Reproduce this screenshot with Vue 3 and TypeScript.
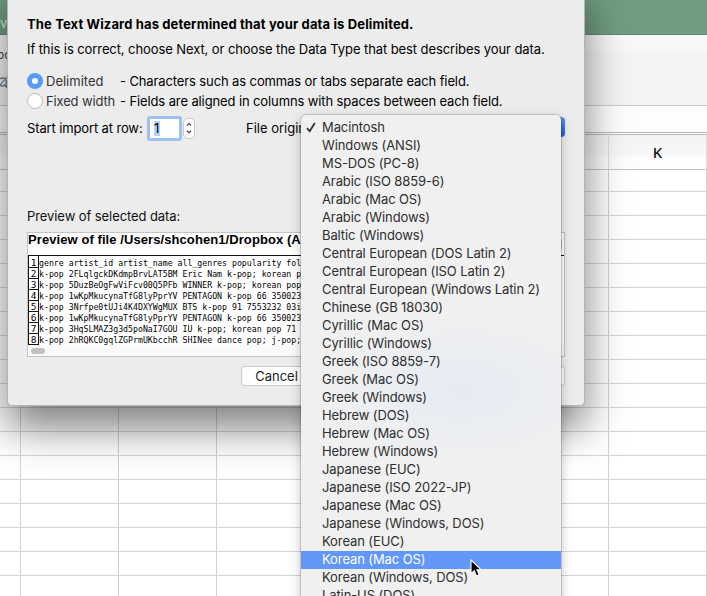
<script setup lang="ts">
import { ref } from 'vue'

const encodings: string[] = [
  'Macintosh', 'Windows (ANSI)', 'MS-DOS (PC-8)', 'Arabic (ISO 8859-6)', 'Arabic (Mac OS)',
  'Arabic (Windows)', 'Baltic (Windows)', 'Central European (DOS Latin 2)',
  'Central European (ISO Latin 2)', 'Central European (Windows Latin 2)', 'Chinese (GB 18030)',
  'Cyrillic (Mac OS)', 'Cyrillic (Windows)', 'Greek (ISO 8859-7)', 'Greek (Mac OS)',
  'Greek (Windows)', 'Hebrew (DOS)', 'Hebrew (Mac OS)', 'Hebrew (Windows)', 'Japanese (EUC)',
  'Japanese (ISO 2022-JP)', 'Japanese (Mac OS)', 'Japanese (Windows, DOS)', 'Korean (EUC)',
  'Korean (Mac OS)', 'Korean (Windows, DOS)', 'Latin-US (DOS)',
]
const selected = ref('Macintosh')
const hovered = ref('Korean (Mac OS)')
const mode = ref<'delimited' | 'fixed'>('delimited')

const preview: string[] = [
  'genre artist_id artist_name all_genres popularity fol',
  'k-pop 2FLqlgckDKdmpBrvLAT5BM Eric Nam k-pop; korean p',
  'k-pop 5DuzBeOgFwViFcv00Q5PFb WINNER k-pop; korean pop',
  'k-pop 1wKpMkucynaTfG8lyPprYV PENTAGON k-pop 66 350023',
  'k-pop 3Nrfpe0tUJi4K4DXYWgMUX BTS k-pop 91 7553232 03i',
  'k-pop 1wKpMkucynaTfG8lyPprYV PENTAGON k-pop 66 350023',
  'k-pop 3HqSLMAZ3g3d5poNaI7GOU IU k-pop; korean pop 71 ',
  'k-pop 2hRQKC0gqlZGPrmUKbcchR SHINee dance pop; j-pop;',
]
const columns: string[] = ['', '', '', '', '', '', '', 'K']
const rows = 18
</script>

<template>
  <div class="screen">
    <div class="titlebar"><span>v</span></div>
    <div class="ribbon">
      <span>oc</span>
      <svg width="8" height="16" viewBox="0 0 8 16" fill="none" stroke-width="1.4">
        <circle cx="2.500" cy="8" r="4" stroke="#777" />
        <path d="M4.500 10.500L8 14" stroke="#777" stroke-width="2" />
        <path d="M0 11L8 2" stroke="#6f94bd" />
      </svg>
    </div>
    <div class="formula"></div>
    <div class="sheet">
      <div class="row head">
        <div v-for="(c, i) in columns" :key="i" class="cell">{{ c }}</div>
      </div>
      <div v-for="r in rows" :key="r" class="row">
        <div v-for="(c, i) in columns" :key="i" class="cell"></div>
      </div>
    </div>

    <div class="dialog">
      <h1><span>The Text Wizard has determined that your data is Delimited.</span></h1>
      <p class="lead">If this is correct, choose Next, or choose the Data Type that best describes your data.</p>
      <label class="option" @click="mode = 'delimited'">
        <i class="radio" :class="{ on: mode === 'delimited' }"></i>
        <span class="name">Delimited</span>
        <span class="desc">- Characters such as commas or tabs separate each field.</span>
      </label>
      <label class="option" @click="mode = 'fixed'">
        <i class="radio" :class="{ on: mode === 'fixed' }"></i>
        <span class="name tight">Fixed width</span>
        <span class="desc">- Fields are aligned in columns with spaces between each field.</span>
      </label>
      <div class="import">
        <span class="start">Start import at row:</span>
        <div class="number"><span>1</span></div>
        <div class="stepper">
          <svg width="11" height="20" viewBox="0 0 11 20" fill="none" stroke="#444" stroke-width="1.3">
            <path d="M3.200 7.200L5.500 5L7.800 7.200M3.200 13L5.500 15.200L7.800 13" />
          </svg>
        </div>
        <span class="origin">File origin:</span>
        <div class="popup"></div>
      </div>
      <p class="caption">Preview of selected data:</p>
      <div class="preview">
        <div class="file">Preview of file /Users/shcohen1/Dropbox (AS</div>
        <div class="lines">
          <div v-for="(line, i) in preview" :key="i" class="line">
            <b>{{ i + 1 }}</b><code>{{ line }}</code>
          </div>
        </div>
        <div class="track"><i></i></div>
        <i class="vthumb"></i>
      </div>
      <div class="buttons">
        <button class="cancel">Cancel</button>
        <button class="finish"></button>
      </div>
    </div>

    <ul class="menu">
      <li
        v-for="name in encodings" :key="name" :class="{ hover: name === hovered }"
        @mouseenter="hovered = name" @click="selected = name"
      >
        <svg v-if="name === selected" class="check" width="10" height="11" viewBox="0 0 10 11">
          <path d="M1 6.200L3.700 9.300L8.800 1" fill="none" stroke="#333" stroke-width="1.8" />
        </svg>
        <span>{{ name }}</span>
      </li>
    </ul>
    <svg class="pointer" width="13" height="19" viewBox="0 0 13 19">
      <path d="M1 1V14.600L4.200 11.700L6.500 17L9.200 15.800L6.900 10.700H11Z" fill="#000" stroke="#fff" stroke-width="1.100" />
    </svg>
  </div>
</template>

<style>
body { margin: 0; overflow: hidden; }
</style>

<style scoped>
* { box-sizing: border-box; }
.screen {
  position: relative; width: 707px; height: 596px; overflow: hidden; background: #fff;
  font-family: Inter, "Liberation Sans", sans-serif; font-size: 13px; color: #111; white-space: nowrap;
}
.titlebar { height: 35px; background: #709d80; border-bottom: 1px solid #5f896e; color: #e0e8e2; padding-top: 15px; line-height: 16px; }
.ribbon { height: 71px; background: linear-gradient(#f8f8f8 17px, #f4f4f4 17px); border-bottom: 1px solid #ccc; display: flex; flex-direction: column; gap: 11px; padding-top: 12px; line-height: 16px; color: #444; font-size: 12px; }
.ribbon span { margin-left: -3px; }
.formula { height: 29px; background: #fdfdfd; border-bottom: 3px double #b8b8b8; }
.sheet { display: flex; flex-direction: column; }
.row { display: grid; grid-template-columns: 21px repeat(7, 98px); height: 24px; width: 707px; }
.cell { border-right: 1px solid #d2d2d2; border-bottom: 1px solid #d5d5d5; }
.head { height: 33px; background: linear-gradient(#f4f4f4, #f8f8f8 22px, #fdfdfd 22px); }
.head .cell { border-color: #c2c2c2; border-right-color: #ddd; text-align: center; font: 500 15px/34px "Noto Sans", sans-serif; }

.dialog {
  position: absolute; left: 7px; top: -20px; width: 578px; height: 426px; padding: 35px 20px 0;
  background: #ececec; border-radius: 5px; border: 1px solid #b4b4b4; border-top: 0;
  box-shadow: 0 22px 42px rgba(0, 0, 0, .5);
  display: flex; flex-direction: column;
}
.dialog > * { margin-left: -1px; margin-right: -1px; flex: none; }
h1 { margin-top: 0; margin-bottom: 0; font-size: 13px; line-height: 18px; font-weight: 700; letter-spacing: .135px; color: #000; }
.lead { margin-top: 7px; margin-bottom: 13px; line-height: 18px; letter-spacing: -.09px; color: #000; }
.option { display: flex; align-items: center; height: 20px; }
.radio { width: 16px; height: 16px; border-radius: 50%; background: #fff; border: 1px solid #bbb; flex: none; }
.radio.on { border: 5px solid #559af5; background: #fff; }
.name { width: 74px; margin-left: 3px; color: #333; }
.tight { letter-spacing: -.15px; }
.desc { letter-spacing: -.115px; color: #000; }
.import { display: flex; align-items: center; height: 24px; margin-top: 5px; color: #000; }
.start { width: 120px; letter-spacing: -.13px; }
.number { width: 35px; height: 25px; border: 3px solid #9fc1f2; background: #fff; padding: 2px 4px; line-height: 15px; border-radius: 3px; }
.number span { background: #b3d3fb; display: block; width: 6px; }
.stepper { width: 12px; height: 21px; margin-left: 1px; border-radius: 5px; background: #fff; border: 1px solid #c8c8c8; display: flex; align-items: center; justify-content: center; }
.origin { margin-left: 51px; width: 65px; }
.popup { flex: 1; height: 20px; border-radius: 4px; background: linear-gradient(#5a94f2, #2459ca); position: relative; top: -1px; }
.caption { margin-top: 67px; margin-bottom: 7px; line-height: 18px; letter-spacing: -.08px; }
.preview { position: relative; height: 125px; background: #fff; border: 1px solid #c4c4c4; overflow: hidden; }
.file { font: bold 13px/14px "Liberation Sans", sans-serif; letter-spacing: .08px; height: 22px; color: #000; }
.lines { border-top: 1px solid #111; height: 90px; }
.line { display: flex; height: 11px; line-height: 14px; font-family: "DejaVu Sans Mono", monospace; font-size: 9.500px; color: #000; }
.line b { width: 11px; height: 12px; border: 1px solid #111; border-top-width: 0; font-weight: 400; text-align: center; flex: none; line-height: 13px; }
.line code { font: inherit; white-space: pre; transform: scaleX(.865); transform-origin: left; }
.track { height: 11px; background: #fafafa; padding: 3px; }
.track i { display: block; width: 14px; height: 6px; border-radius: 3px; background: #c1c1c1; }
.vthumb { position: absolute; right: 2px; top: 5px; width: 6px; height: 12px; border-radius: 3px; background: #c1c1c1; }
.buttons { display: flex; justify-content: space-between; margin-top: 9px; padding-left: 214px; }
button { height: 20px; border: 1px solid #c8c8c8; border-radius: 4px; background: #fff; font: inherit; color: #222; padding: 0; width: 71px; line-height: 17px; }

.menu {
  position: absolute; left: 301px; top: 115px; width: 260px; margin: 0; padding: 4px 0; list-style: none;
  background: radial-gradient(ellipse 150px 75px at 160px 275px, #e6ebf3, rgba(238, 239, 241, 0)), #f0f0f0;
  border-radius: 5px 5px 0 0; color: #2e2e2e; letter-spacing: -.1px;
  box-shadow: 0 0 0 1px rgba(0, 0, 0, .15), 0 4px 12px rgba(0, 0, 0, .25);
}
.menu li { height: 18px; line-height: 16px; display: flex; align-items: center; padding: 0 0 2px 5px; }
.menu li > span:first-child { margin-left: 16px; }
.check { width: 10px; margin-right: 6px; }
.menu li.hover { background: #6397f7; color: #fff; }
.pointer { position: absolute; left: 470px; top: 559px; }
</style>
